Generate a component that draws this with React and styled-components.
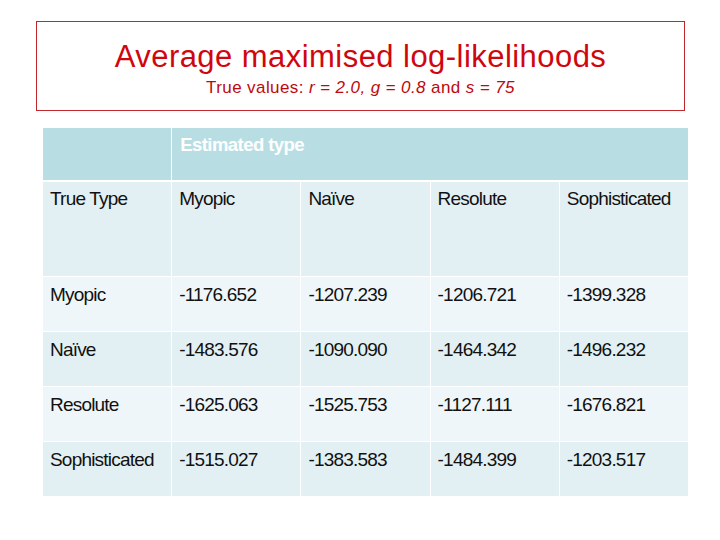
import React from "react";
import styled, { createGlobalStyle } from "styled-components";

const Global = createGlobalStyle`
  html, body { margin: 0; padding: 0; background: #ffffff; }
  body { font-family: "Liberation Sans", Arial, sans-serif; }
`;

const Page = styled.div`
  width: 720px;
  height: 540px;
  padding-top: 21px;
  box-sizing: border-box;
`;

const TitleBox = styled.div`
  margin-left: 36px;
  width: 649px;
  height: 90px;
  box-sizing: border-box;
  border: 1px solid #c0282d;
  padding-top: 17px;
  text-align: center;
`;

const Title = styled.div`
  font-size: 31px;
  line-height: 36px;
  letter-spacing: 0.45px;
  color: #d0060e;
`;

const Subtitle = styled.div`
  margin-top: 3px;
  font-size: 17px;
  line-height: 20px;
  letter-spacing: 0.4px;
  color: #c0080e;
`;

const Table = styled.div`
  margin: 17px 0 0 43px;
  width: 645px;
  display: grid;
  grid-template-columns: repeat(5, 1fr);
  grid-template-rows: 53px 94px 54px 54px 54px 54px;
  column-gap: 1px;
  row-gap: 1px;
`;

const HeadCell = styled.div`
  grid-column: ${(p) => p.$span || "auto"};
  background: #b8dee3;
  color: #ffffff;
  font-weight: bold;
  font-size: 18.5px;
  line-height: 21px;
  letter-spacing: -0.55px;
  padding: 6px 0 0 8px;
  margin-bottom: 1px;
`;

const Cell = styled.div`
  background: ${(p) => (p.$alt ? "#eff6f9" : "#e3f0f3")};
  color: #111111;
  font-size: 19px;
  line-height: 22px;
  letter-spacing: -0.8px;
  padding: ${(p) => (p.$tall ? "6px" : "7px")} 0 0 7px;
  white-space: nowrap;
`;

const rows = [
  ["Myopic", "-1176.652", "-1207.239", "-1206.721", "-1399.328"],
  ["Naïve", "-1483.576", "-1090.090", "-1464.342", "-1496.232"],
  ["Resolute", "-1625.063", "-1525.753", "-1127.111", "-1676.821"],
  ["Sophisticated", "-1515.027", "-1383.583", "-1484.399", "-1203.517"],
];

const cols = ["True Type", "Myopic", "Naïve", "Resolute", "Sophisticated"];

export default function App() {
  return (
    <>
      <Global />
      <Page>
        <TitleBox>
          <Title>Average maximised log-likelihoods</Title>
          <Subtitle>
            True values: <i>r = 2.0, g = 0.8</i> and <i>s = 75</i>
          </Subtitle>
        </TitleBox>
        <Table>
          <HeadCell />
          <HeadCell $span="span 4">Estimated type</HeadCell>
          {cols.map((c) => (
            <Cell key={c} $tall>
              {c}
            </Cell>
          ))}
          {rows.map((r, i) =>
            r.map((v, j) => (
              <Cell key={i + "-" + j} $alt={i % 2 === 0}>
                {v}
              </Cell>
            ))
          )}
        </Table>
      </Page>
    </>
  );
}
